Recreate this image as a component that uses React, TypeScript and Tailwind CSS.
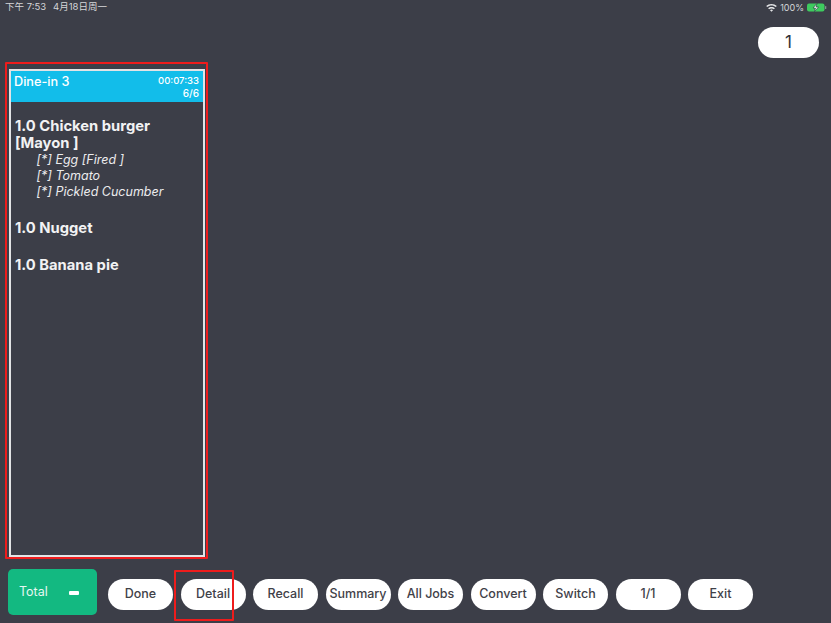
import React from 'react';

const buttons = ['Done', 'Detail', 'Recall', 'Summary', 'All Jobs', 'Convert', 'Switch', '1/1', 'Exit'];

const App: React.FC = () => {
  return (
    <div className="flex h-[623px] w-[831px] flex-col overflow-hidden bg-[#3c3e48] font-['Inter','Noto_Sans_CJK_SC',sans-serif]">
      {/* status bar */}
      <div className="flex h-[15px] items-center justify-between pl-[5px] pr-[4px] text-[9.500px] text-[#d5d6d9]">
        <div className="flex gap-[7px]">
          <span>下午 7:53</span>
          <span>4月18日周一</span>
        </div>
        <div className="flex items-center gap-[3px]">
          <svg width="11" height="8" viewBox="0 0 11 8" fill="#e4e5e7">
            <path d="M5.5 0C3.4 0 1.6.8.2 2.100l1 1C2.300 2.100 3.800 1.500 5.500 1.500s3.200.6 4.300 1.600l1-1C9.400.8 7.600 0 5.500 0z" />
            <path d="M5.500 3C4.200 3 3 3.500 2.100 4.300l1 1C3.700 4.800 4.600 4.500 5.500 4.500s1.800.3 2.400.8l1-1C8 3.500 6.800 3 5.500 3z" />
            <path d="M5.500 5.600c-.6 0-1.100.2-1.500.6l1.500 1.600L7 6.200c-.4-.4-.9-.6-1.500-.6z" />
          </svg>
          <span className="text-[9px]">100%</span>
          <svg width="20" height="9" viewBox="0 0 20 9">
            <rect x="0" y="0.500" width="17.500" height="8" rx="2" fill="#3ecb5f" />
            <rect x="18" y="3" width="1.300" height="3" rx="0.600" fill="#8a8c92" />
            <path d="M10 0.500 6 5h2.500L7.500 8.500l4-4.500H9z" fill="#ffffff" stroke="#24303a" strokeWidth="0.600" />
          </svg>
        </div>
      </div>

      {/* count pill */}
      <div className="flex justify-end pr-[12px] pt-[12px]">
        <div className="flex h-[31px] w-[61px] items-center justify-center rounded-full bg-white text-[17px] text-[#2f3138]">1</div>
      </div>

      {/* ticket column, red frame is the picture's annotation */}
      <div className="mt-[4px] ml-[5px] flex h-[497px] w-[203px] rounded-[1px] border-[2px] border-[#ee1c1c] pl-[2px] pr-[1px] pt-[5px]">
        <div className="flex h-[488px] w-full flex-col border-[2px] border-[#e2e3e5]">
          <div className="flex h-[31px] items-start justify-between bg-[#12bdea] pl-[3px] pr-[4px] pt-[3px] text-white">
            <span className="text-[12.700px] font-medium leading-[16px]">Dine-in 3</span>
            <div className="flex flex-col items-end text-[9.500px] font-medium leading-[13px]">
              <span>00:07:33</span>
              <span className="text-[10px]">6/6</span>
            </div>
          </div>
          <div className="pl-[4px] pt-[16px] text-[#f2f2f3]">
            <div className="text-[14.750px] font-bold leading-[16.500px]">
              1.0 Chicken burger
              <br />
              [Mayon ]
            </div>
            <div className="pl-[21.500px] pt-[1px] text-[12.500px] italic leading-[16.200px] text-[#ececee]">
              <div>[*] Egg [Fired ]</div>
              <div>[*] Tomato</div>
              <div>[*] Pickled Cucumber</div>
            </div>
            <div className="mt-[19.500px] text-[14.750px] font-bold leading-[16.500px]">1.0 Nugget</div>
            <div className="mt-[20px] text-[14.750px] font-bold leading-[16.500px]">1.0 Banana pie</div>
          </div>
        </div>
      </div>

      {/* bottom toolbar */}
      <div className="relative mt-[10px] flex h-[46px] items-start pl-[8px]">
        <div className="flex h-[46px] w-[89px] items-center justify-between rounded-[5px] bg-[#13b981] pl-[11px] pr-[18px] text-[12.500px] text-[#e6f7f1]">
          <span className="mt-[1px]">Total</span>
          <span className="mt-[2px] h-[4px] w-[10px] rounded-[1px] bg-white" />
        </div>
        <div className="ml-[11px] mt-[9.500px] flex gap-[7.500px]">
          {buttons.map(b => (
            <div
              key={b}
              className="flex h-[31px] w-[65px] items-center justify-center rounded-full bg-white text-[12.500px] font-medium text-[#3f4148]"
            >
              {b}
            </div>
          ))}
        </div>
        <div className="absolute left-[174px] top-[1px] h-[51px] w-[60px] rounded-[1px] border-[2px] border-[#ee1c1c]" />
      </div>
    </div>
  );
};

export default App;
